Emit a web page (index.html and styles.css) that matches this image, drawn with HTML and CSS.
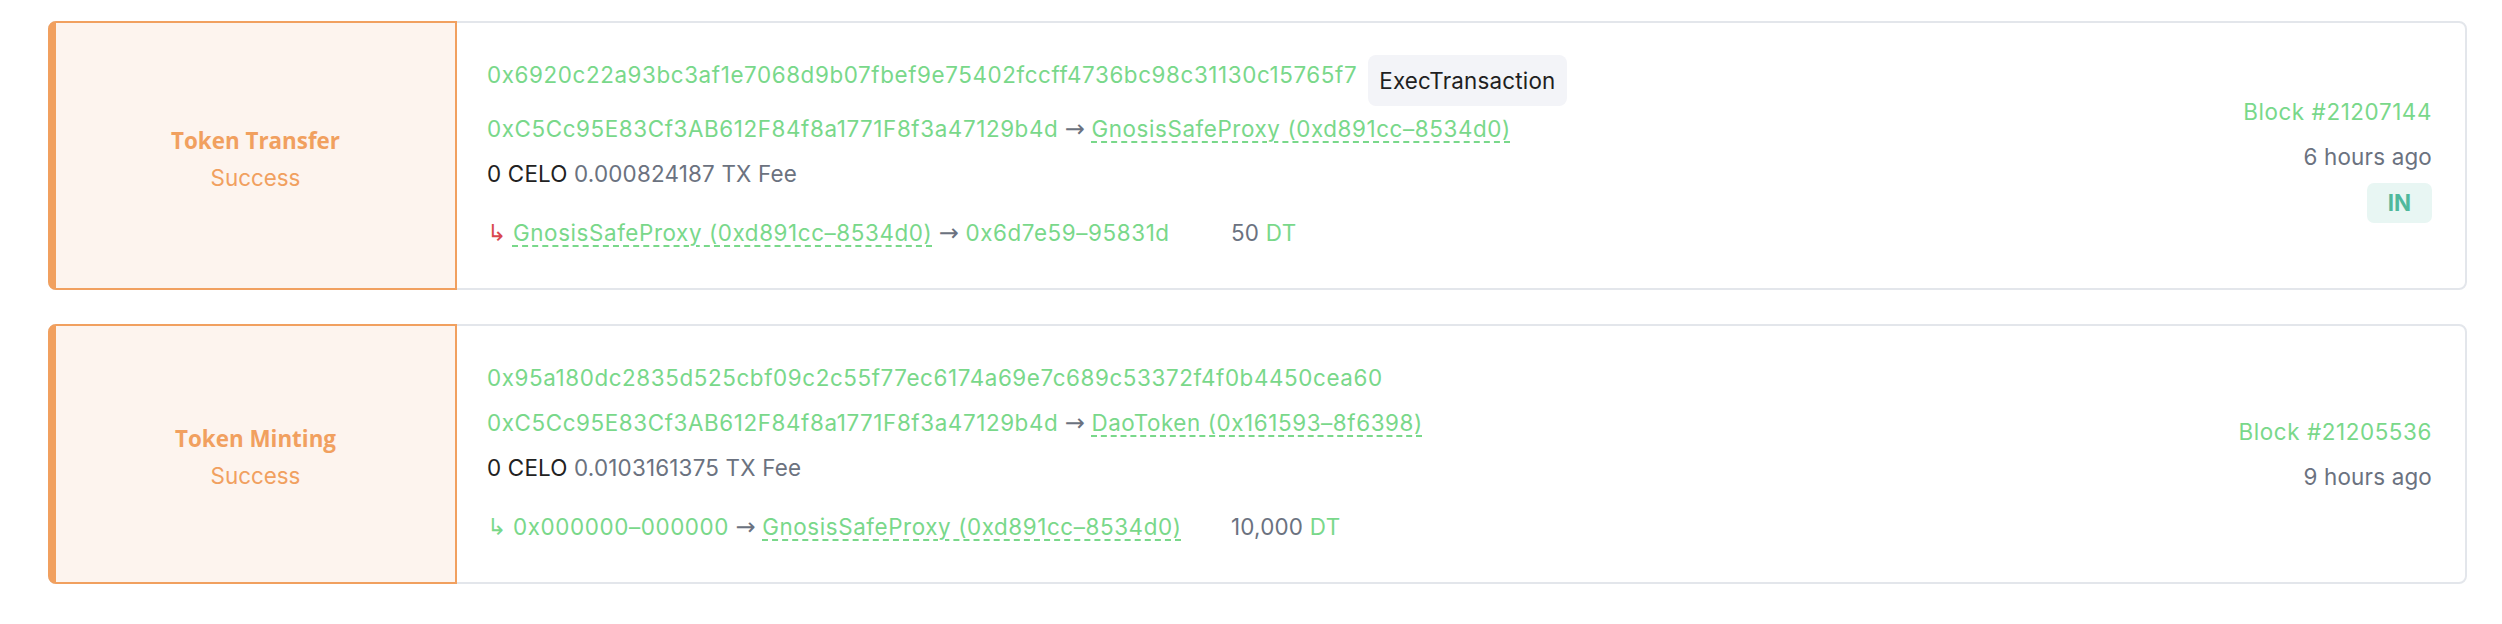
FILE: index.html
```html
<!DOCTYPE html>
<html lang="en">
<head>
<meta charset="utf-8">
<title>Transactions</title>
<link rel="stylesheet" href="styles.css">
</head>
<body>
<div class="list">
  <div class="tile">
    <div class="tile-type">
      <div class="type-title">Token Transfer</div>
      <div class="type-status">Success</div>
    </div>
    <div class="tile-main">
      <div class="line line-first">
        <span class="green hash">0x6920c22a93bc3af1e7068d9b07fbef9e75402fccff4736bc98c31130c15765f7</span>
        <span class="method">ExecTransaction</span>
      </div>
      <div class="line">
        <span class="green">0xC5Cc95E83Cf3AB612F84f8a1771F8f3a47129b4d</span> <span class="muted arrow">→</span> <span class="green dashed">GnosisSafeProxy (0xd891cc–8534d0)</span>
      </div>
      <div class="line">
        <span class="dark">0 CELO</span> <span class="muted">0.000824187 TX Fee</span>
      </div>
      <div class="transfer">
        <div class="transfer-path"><span class="hook hook-out">↳</span> <span class="green dashed">GnosisSafeProxy (0xd891cc–8534d0)</span> <span class="muted arrow">→</span> <span class="green">0x6d7e59–95831d</span></div>
        <div class="transfer-amount"><span class="muted">50</span> <span class="green">DT</span></div>
      </div>
    </div>
    <div class="tile-side">
      <div class="green side-line">Block #21207144</div>
      <div class="muted side-line">6 hours ago</div>
      <div class="dir">IN</div>
    </div>
  </div>

  <div class="tile">
    <div class="tile-type">
      <div class="type-title">Token Minting</div>
      <div class="type-status">Success</div>
    </div>
    <div class="tile-main">
      <div class="line">
        <span class="green hash">0x95a180dc2835d525cbf09c2c55f77ec6174a69e7c689c53372f4f0b4450cea60</span>
      </div>
      <div class="line">
        <span class="green">0xC5Cc95E83Cf3AB612F84f8a1771F8f3a47129b4d</span> <span class="muted arrow">→</span> <span class="green dashed">DaoToken (0x161593–8f6398)</span>
      </div>
      <div class="line">
        <span class="dark">0 CELO</span> <span class="muted">0.0103161375 TX Fee</span>
      </div>
      <div class="transfer">
        <div class="transfer-path"><span class="hook hook-in">↳</span> <span class="green">0x000000–000000</span> <span class="muted arrow">→</span> <span class="green dashed">GnosisSafeProxy (0xd891cc–8534d0)</span></div>
        <div class="transfer-amount"><span class="muted">10,000</span> <span class="green">DT</span></div>
      </div>
    </div>
    <div class="tile-side">
      <div class="green side-line">Block #21205536</div>
      <div class="muted side-line">9 hours ago</div>
    </div>
  </div>
</div>
</body>
</html>
```

FILE: styles.css
```css
html, body {
  margin: 0;
  padding: 0;
  background: #ffffff;
}

body {
  font-family: "Inter", "Open Sans", sans-serif;
  font-size: 22.4px;
  letter-spacing: 0.2px;
  color: #222222;
}

.list {
  display: flex;
  flex-direction: column;
  gap: 34px;
  padding: 21px 35px 0 48px;
}

.tile {
  display: flex;
  border: 2px solid #e3e6eb;
  border-radius: 8px;
  background: #ffffff;
}

.tile-type {
  width: 399px;
  flex: none;
  margin: -2px 0 -2px -2px;
  border: 2px solid #f1a05f;
  border-left-width: 8px;
  border-radius: 8px 0 0 8px;
  background: #fdf4ee;
  color: #f1a05f;
  display: flex;
  flex-direction: column;
  justify-content: center;
  align-items: center;
  padding-top: 6px;
  letter-spacing: 0;
}

.type-title {
  font-family: "Open Sans", sans-serif;
  font-weight: 700;
  line-height: 37px;
}

.type-status {
  line-height: 37px;
}

.tile-main {
  flex: 1;
  padding: 29px 0 33px 30px;
  white-space: nowrap;
}

.line {
  line-height: 45px;
  height: 45px;
}

.line-first {
  display: flex;
  align-items: flex-start;
  height: 54px;
}

.method {
  margin: 3px 0 0 11px;
  height: 51px;
  line-height: 51px;
  padding: 0 11px;
  border-radius: 8px;
  background: #f3f4f8;
  color: #1f1f22;
}

.green {
  color: #79d88a;
  letter-spacing: 0.6px;
}

.muted {
  color: #6b7280;
}

.dark {
  color: #222222;
}

.arrow {
  font-family: "DejaVu Sans", sans-serif;
  font-size: 24px;
  line-height: 1;
  letter-spacing: 0;
}

.dashed {
  text-decoration: underline dashed;
  text-decoration-thickness: 1.5px;
  text-underline-offset: 4px;
}

.transfer {
  margin-top: 14px;
  display: grid;
  grid-template-columns: 744px auto;
  line-height: 45px;
  height: 45px;
}

.hook {
  display: inline-block;
  font-family: "DejaVu Sans", sans-serif;
  font-size: 23px;
}

.hook-out {
  color: #d9484e;
}

.hook-in {
  color: #79d88a;
}

.tile-side {
  flex: none;
  display: flex;
  flex-direction: column;
  justify-content: center;
  align-items: flex-end;
  padding-right: 33px;
  white-space: nowrap;
}

.side-line {
  line-height: 45px;
}

.dir {
  margin-top: 4px;
  width: 65px;
  height: 40px;
  line-height: 40px;
  text-align: center;
  border-radius: 7px;
  background: #e8f6f3;
  color: #4fb89c;
  font-weight: 700;
  letter-spacing: 0;
}
```
